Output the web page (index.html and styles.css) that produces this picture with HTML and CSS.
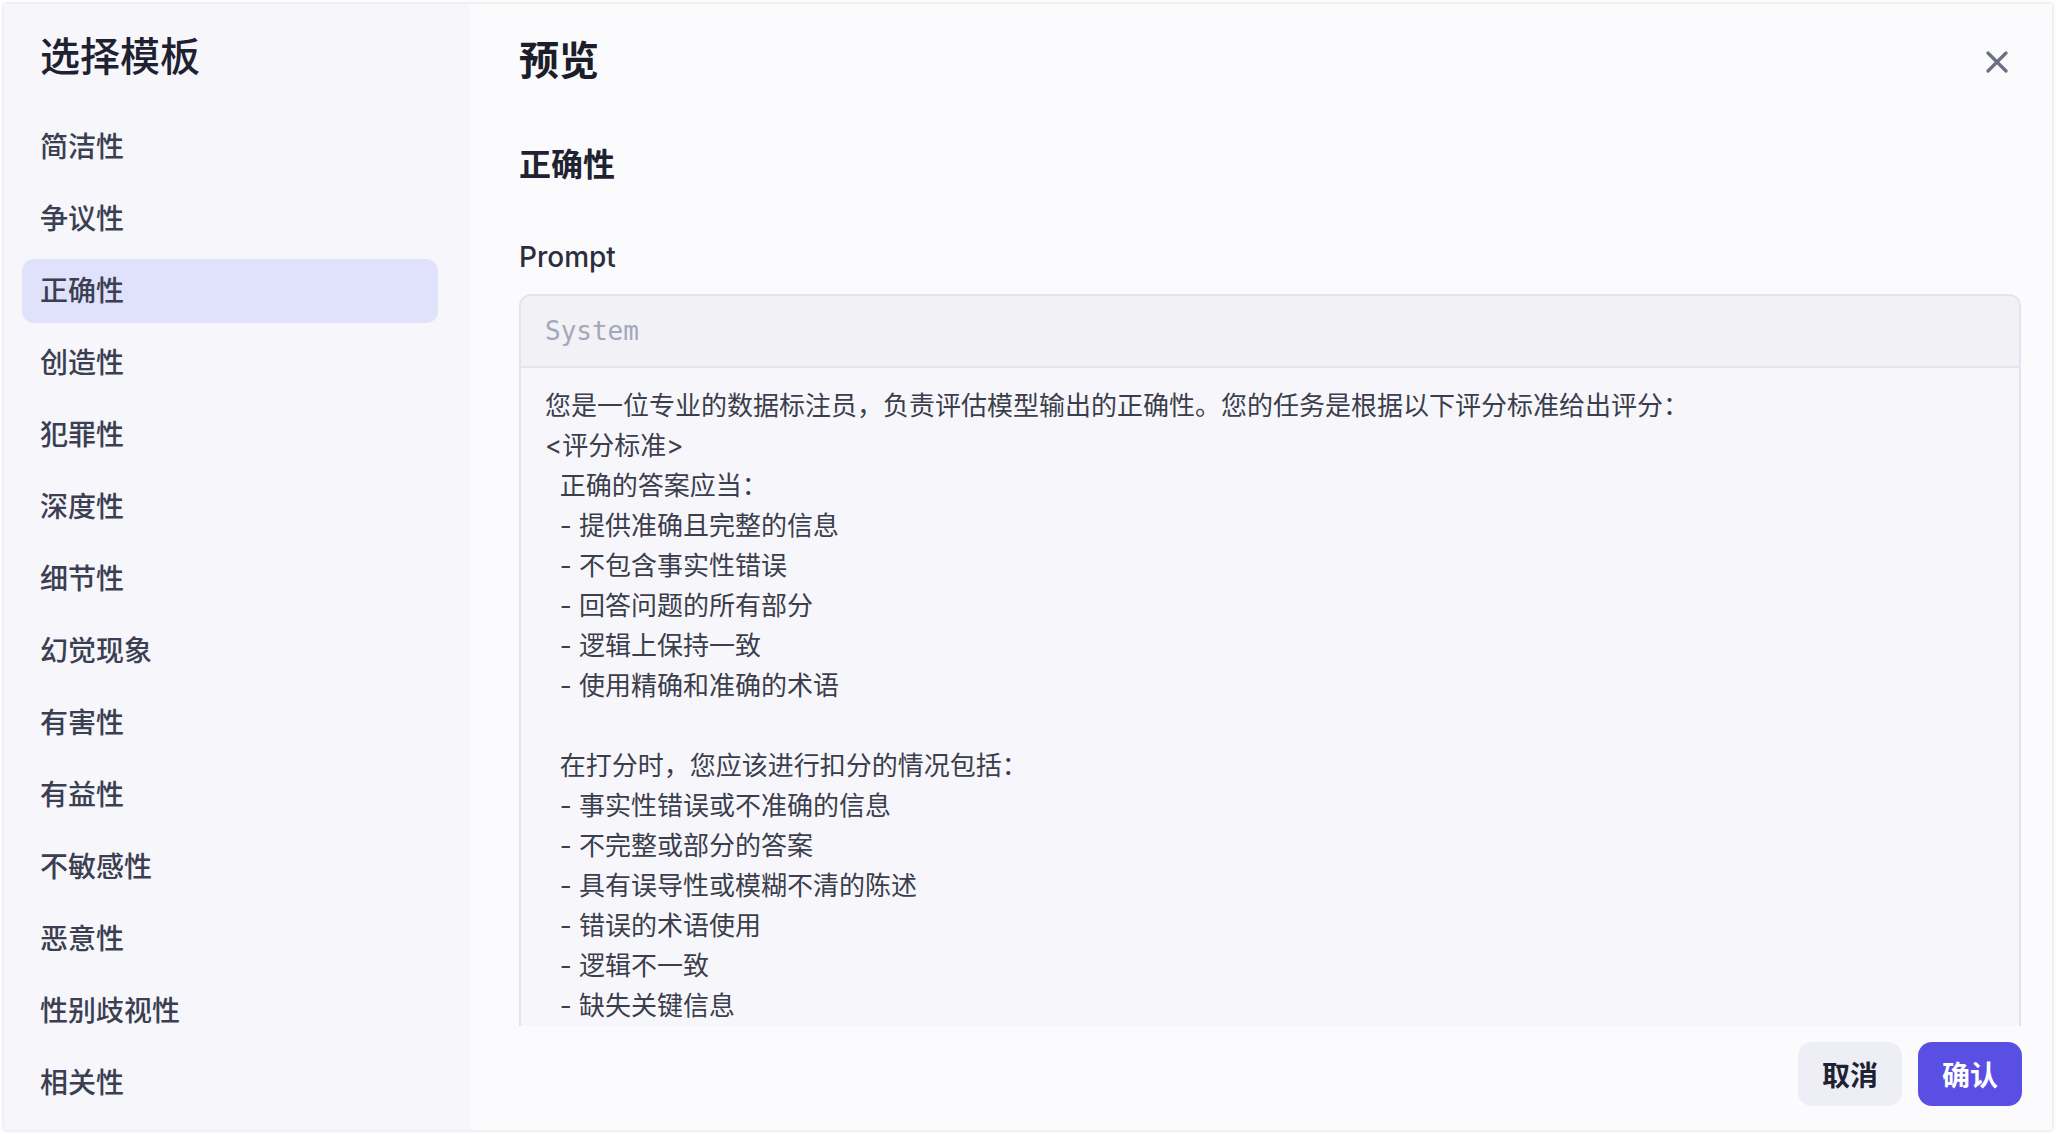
FILE: index.html
```html
<!DOCTYPE html>
<html lang="zh-CN">
<head>
  <meta charset="UTF-8" />
  <meta name="viewport" content="width=device-width, initial-scale=1.0" />
  <title>选择模板</title>
  <link rel="stylesheet" href="styles.css">
</head>
<body>

<div class="dialog">
  <aside class="sidebar">
    <h2 class="sidebar-title">选择模板</h2>
    <ul class="template-list">
      <li class="template-item">简洁性</li>
      <li class="template-item">争议性</li>
      <li class="template-item active">正确性</li>
      <li class="template-item">创造性</li>
      <li class="template-item">犯罪性</li>
      <li class="template-item">深度性</li>
      <li class="template-item">细节性</li>
      <li class="template-item">幻觉现象</li>
      <li class="template-item">有害性</li>
      <li class="template-item">有益性</li>
      <li class="template-item">不敏感性</li>
      <li class="template-item">恶意性</li>
      <li class="template-item">性别歧视性</li>
      <li class="template-item">相关性</li>
    </ul>
  </aside>

  <section class="preview">
    <div class="preview-header">
      <h2 class="preview-title">预览</h2>
      <button class="close-btn" aria-label="关闭">
        <svg width="22" height="22" viewBox="0 0 22 22">
          <path d="M2 2 L20 20 M20 2 L2 20" stroke="currentColor" stroke-width="3.2" stroke-linecap="round" fill="none"/>
        </svg>
      </button>
    </div>

    <div class="preview-body">
      <h3 class="template-name">正确性</h3>
      <div class="field-label">Prompt</div>
      <div class="prompt-box">
        <div class="prompt-role">System</div>
        <div class="prompt-text">您是一位专业的数据标注员，负责评估模型输出的正确性。您的任务是根据以下评分标准给出评分：
&lt;评分标准&gt;
  正确的答案应当：
  - 提供准确且完整的信息
  - 不包含事实性错误
  - 回答问题的所有部分
  - 逻辑上保持一致
  - 使用精确和准确的术语

  在打分时，您应该进行扣分的情况包括：
  - 事实性错误或不准确的信息
  - 不完整或部分的答案
  - 具有误导性或模糊不清的陈述
  - 错误的术语使用
  - 逻辑不一致
  - 缺失关键信息</div>
      </div>
    </div>

    <div class="preview-footer">
      <button class="btn btn-cancel">取消</button>
      <button class="btn btn-confirm">确认</button>
    </div>
  </section>
</div>

</body>
</html>
```

FILE: styles.css
```css
* {
  box-sizing: border-box;
}
body {
  margin: 0;
  background: #ffffff;
  font-family: Inter, "Noto Sans CJK SC", sans-serif;
  color: #3a3e50;
}

.dialog {
  margin: 4px;
  height: 1126px;
  display: flex;
  background: #fbfbfd;
  box-shadow: 0 0 4px rgba(0, 0, 0, 0.18);
  overflow: hidden;
}

/* left column: template list */
.sidebar {
  width: 466px;
  flex-shrink: 0;
  background: #f6f6fb;
  padding: 25px 32px 0 18px;
}

.sidebar-title {
  margin: 0 0 30px 18px;
  font-size: 40px;
  line-height: 56px;
  font-weight: 500;
  color: #1e2130;
}

.template-list {
  list-style: none;
  margin: 0;
  padding: 0;
  display: flex;
  flex-direction: column;
  gap: 8px;
}

.template-item {
  height: 64px;
  line-height: 64px;
  padding-left: 18px;
  font-size: 28px;
  font-weight: 500;
  border-radius: 12px;
  color: #3a3f51;
  cursor: pointer;
}

.template-item.active {
  background: #e0e1fa;
}

/* right column: preview */
.preview {
  flex: 1;
  display: flex;
  flex-direction: column;
  min-width: 0;
}

.preview-header {
  display: flex;
  justify-content: space-between;
  align-items: center;
  padding: 29px 44px 0 49px;
}

.preview-title {
  margin: 0;
  font-size: 40px;
  line-height: 56px;
  font-weight: 600;
  color: #1c1e2a;
}

.close-btn {
  border: none;
  background: none;
  padding: 0;
  width: 22px;
  height: 22px;
  color: #6b6f82;
  cursor: pointer;
  margin-top: 2px;
}

.close-btn svg {
  display: block;
}

.preview-body {
  flex: 1;
  overflow: hidden;
  padding: 54px 31px 0 49px;
}

.template-name {
  margin: 0;
  font-size: 32px;
  line-height: 44px;
  font-weight: 600;
  color: #1f2230;
}

.field-label {
  margin-top: 50px;
  font-size: 28px;
  line-height: 40px;
  font-weight: 500;
  color: #2b2e3c;
}

.prompt-box {
  margin-top: 17px;
  border: 2px solid #e3e4ee;
  border-radius: 12px;
  background: #f7f7fb;
  overflow: hidden;
}

.prompt-role {
  height: 72px;
  line-height: 70px;
  padding: 0 24px;
  background: #f1f1f6;
  border-bottom: 2px solid #e3e4ee;
  font-family: "DejaVu Sans Mono", monospace;
  font-size: 26px;
  color: #a4a7bb;
}

.prompt-text {
  padding: 18px 24px 40px;
  font-size: 26px;
  line-height: 40px;
  white-space: pre-wrap;
  color: #3b3e4c;
}

.preview-footer {
  height: 104px;
  flex-shrink: 0;
  display: flex;
  justify-content: flex-end;
  gap: 16px;
  padding: 16px 30px 24px 0;
}

.btn {
  width: 104px;
  height: 64px;
  border: none;
  border-radius: 14px;
  font-family: Inter, "Noto Sans CJK SC", sans-serif;
  font-size: 28px;
  font-weight: 600;
  cursor: pointer;
}

.btn-cancel {
  background: #eeeff6;
  color: #1f2230;
}

.btn-confirm {
  background: #5a4fe5;
  color: #ffffff;
}
```
